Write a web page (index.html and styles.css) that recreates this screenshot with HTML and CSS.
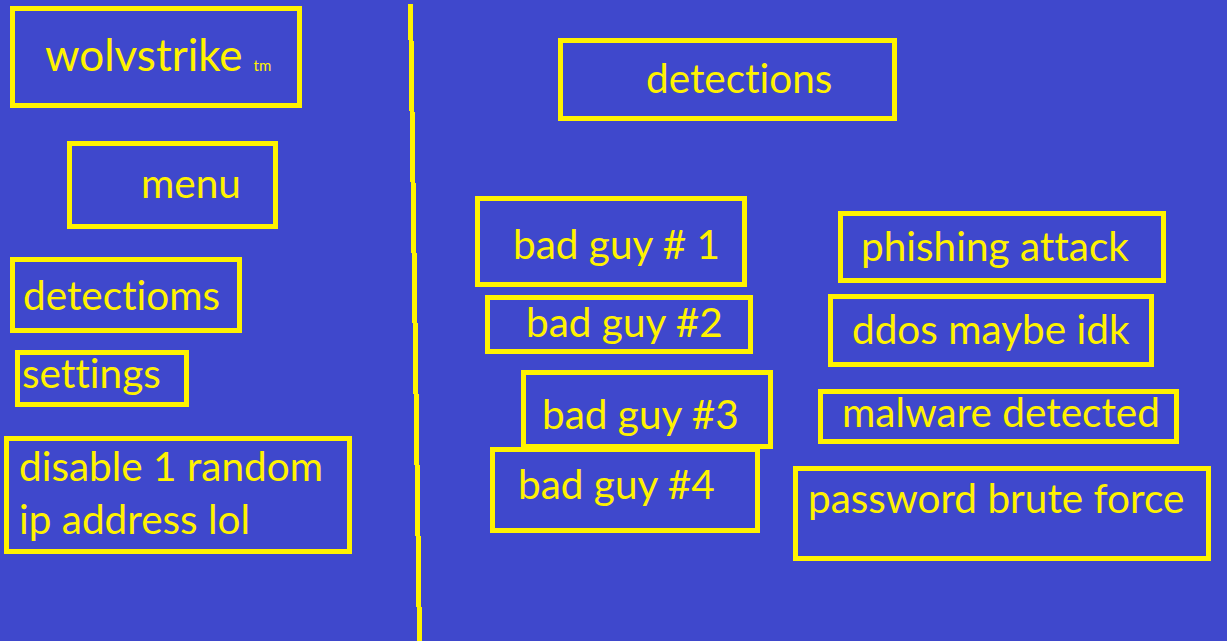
FILE: index.html
```html
<!DOCTYPE html>
<html lang="en">
<head>
<meta charset="utf-8">
<title>wolvstrike</title>
<link rel="stylesheet" href="styles.css">
</head>
<body>
<div class="page">
  <aside class="sidebar">
    <div class="box box-brand"><span class="brand">wolvstrike</span><span class="tm">tm</span></div>
    <div class="box box-menu">menu</div>
    <div class="box box-nav-detections">detectioms</div>
    <div class="box box-nav-settings">settings</div>
    <div class="box box-nav-disable"><span class="multi">disable 1 random<br>ip address lol</span></div>
  </aside>
  <svg class="divider" width="24" height="641" viewBox="0 0 24 641" aria-hidden="true">
    <line x1="10.5" y1="4" x2="19.5" y2="641" stroke="#fff200" stroke-width="5" shape-rendering="crispEdges"/>
  </svg>
  <main class="main">
    <div class="box box-title">detections</div>
    <div class="columns">
      <div class="col col-suspects">
        <div class="box box-s1">bad guy # 1</div>
        <div class="box box-s2">bad guy #2</div>
        <div class="box box-s3">bad guy #3</div>
        <div class="box box-s4">bad guy #4</div>
      </div>
      <div class="col col-threats">
        <div class="box box-t1">phishing attack</div>
        <div class="box box-t2">ddos maybe idk</div>
        <div class="box box-t3">malware detected</div>
        <div class="box box-t4">password brute force</div>
      </div>
    </div>
  </main>
</div>
</body>
</html>
```

FILE: styles.css
```css
html, body {
  margin: 0;
  padding: 0;
}

body {
  background: #3f48cc;
  color: #fff200;
  font-family: "Lato", "Liberation Sans", sans-serif;
  font-size: 40.5px;
  line-height: 32px;
  font-variant-ligatures: none;
  width: 1227px;
  height: 641px;
  overflow: hidden;
}

.page {
  display: flex;
  height: 641px;
}

.sidebar {
  width: 400px;
  flex: none;
  display: flex;
  flex-direction: column;
  align-items: flex-start;
}

.divider {
  flex: none;
  display: block;
}

.main {
  flex: 1;
  display: flex;
  flex-direction: column;
  align-items: flex-start;
}

.columns {
  display: flex;
  align-items: flex-start;
}

.col {
  display: flex;
  flex-direction: column;
  align-items: flex-start;
}

.col-suspects {
  width: 360px;
}

.box {
  box-sizing: border-box;
  border: 5px solid #fff200;
  white-space: nowrap;
  position: relative;
}

/* sidebar */
.box-brand { margin: 6px 0 0 10px; width: 292px; height: 102px; padding: 27px 0 0 30px; }
.brand { font-size: 44px; }
.tm { font-size: 15px; margin-left: 11px; }
.box-menu { margin: 33px 0 0 67px; width: 211px; height: 88px; padding: 21px 0 0 69px; }
.box-nav-detections { margin: 28px 0 0 10px; width: 232px; height: 76px; padding: 17px 0 0 8px; }
.box-nav-settings { margin: 17px 0 0 15px; width: 174px; height: 57px; padding: 2px 0 0 2px; }
.box-nav-disable { margin: 29px 0 0 4px; width: 348px; height: 118px; padding: 0 0 0 10px; }
.multi { display: block; line-height: 53px; margin-top: -2px; }

/* main */
.box-title { margin: 38px 0 0 134px; width: 339px; height: 83px; padding: 19px 0 0 83px; }

.box-s1 { margin: 75px 0 0 51px; width: 272px; height: 91px; padding: 27px 0 0 33px; }
.box-s2 { margin: 8px 0 0 61px; width: 268px; height: 59px; padding: 6px 0 0 36px; }
.box-s3 { margin: 16px 0 0 97px; width: 252px; height: 79px; padding: 23px 0 0 16px; }
.box-s4 { margin: -2px 0 0 66px; width: 270px; height: 86px; padding: 16px 0 0 23px; }

.box-t1 { margin: 90px 0 0 54px; width: 328px; height: 72px; padding: 14px 0 0 18px; }
.box-t2 { margin: 11px 0 0 44px; width: 326px; height: 73px; padding: 14px 0 0 19px; }
.box-t3 { margin: 22px 0 0 34px; width: 361px; height: 55px; padding: 2px 0 0 19px; }
.box-t4 { margin: 22px 0 0 9px; width: 418px; height: 95px; padding: 11px 0 0 10px; }
```
